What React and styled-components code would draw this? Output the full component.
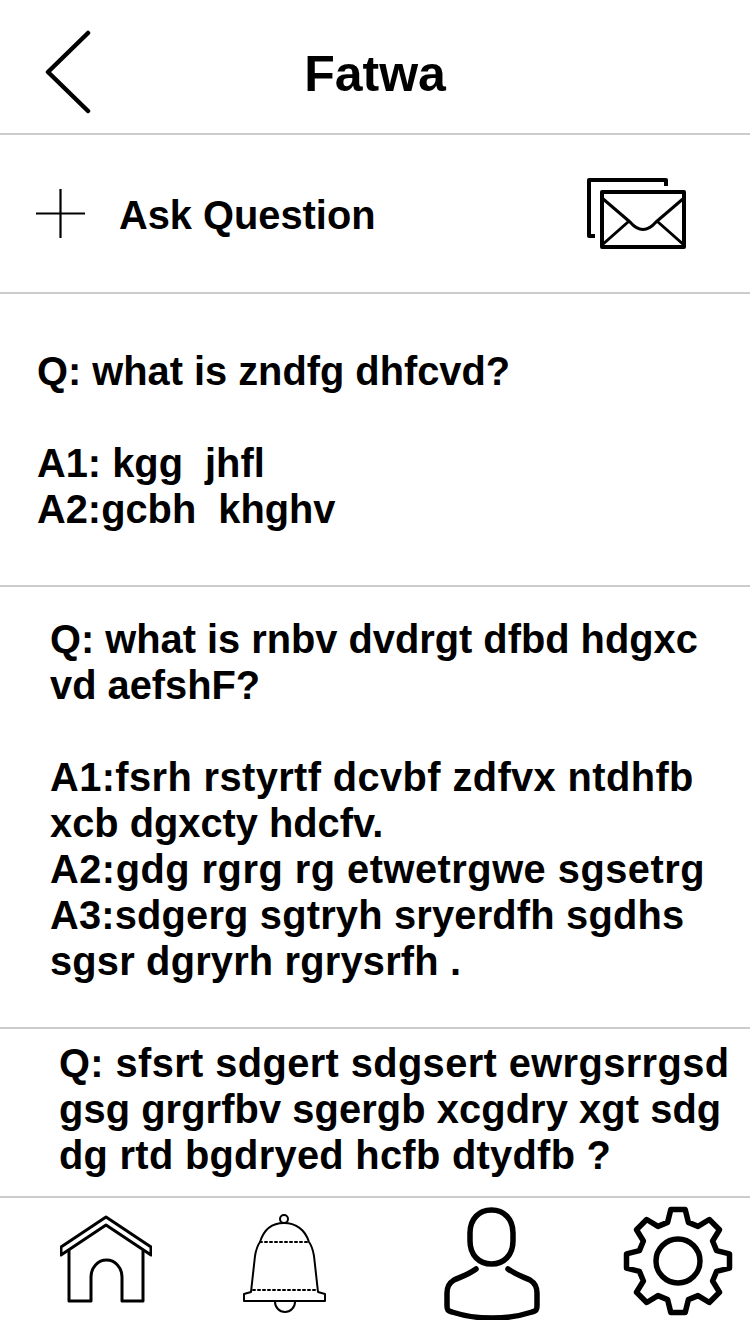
import styled, { createGlobalStyle } from "styled-components";

const GlobalStyle = createGlobalStyle`
    html, body {
        margin: 0;
        padding: 0;
        background: #fff;
    }
    body {
        font-family: "Liberation Sans", Arial, sans-serif;
        color: #000;
    }
`;

// 8 teeth, drawn from polar points so they stay even
function gearPath() {
    const pt = (deg, r) => {
        const a = ((deg - 90) * Math.PI) / 180;
        return `${(56 + r * Math.cos(a)).toFixed(1)} ${(56 + r * Math.sin(a)).toFixed(1)}`;
    };
    let d = "";
    for (let i = 0; i < 8; i++) {
        const t = i * 45;
        d += `${i === 0 ? "M" : "L"}${pt(t - 15, 40)} L${pt(t - 8, 52)} L${pt(t + 8, 52)} L${pt(t + 15, 40)} `;
    }
    return d + "Z";
}

// tracking is per line, the original font runs a bit wider on some letters
const questions = [
    {
        indent: 37,
        top: 54,
        bottom: 53,
        lines: [
            { text: "Q: what is zndfg dhfcvd?" },
            { text: "" },
            { text: "A1: kgg  jhfl" },
            { text: "A2:gcbh  khghv" },
        ],
    },
    {
        indent: 50,
        top: 29,
        bottom: 43,
        lines: [
            { text: "Q: what is rnbv dvdrgt dfbd hdgxc" },
            { text: "vd aefshF?" },
            { text: "" },
            { text: "A1:fsrh rstyrtf dcvbf zdfvx ntdhfb", tracking: 0.4 },
            { text: "xcb dgxcty hdcfv." },
            { text: "A2:gdg rgrg rg etwetrgwe sgsetrg", tracking: 0.5 },
            { text: "A3:sdgerg sgtryh sryerdfh sgdhs", tracking: 0.2 },
            { text: "sgsr dgryrh rgrysrfh .", tracking: 0.2 },
        ],
    },
    {
        indent: 59,
        top: 11,
        bottom: 18,
        lines: [
            { text: "Q: sfsrt sdgert sdgsert ewrgsrrgsd", tracking: 0.4 },
            { text: "gsg grgrfbv sgergb xcgdry xgt sdg", tracking: 0.1 },
            { text: "dg rtd bgdryed hcfb dtydfb ?", tracking: 0.3 },
        ],
    },
];

function App() {
    return (
        <>
            <GlobalStyle />
            <Page>
                <Header>
                    <BackIcon width="46" height="84" viewBox="0 0 46 84">
                        <path d="M43 3 L3 42 L43 81" />
                    </BackIcon>
                    <Title>Fatwa</Title>
                </Header>
                <AskRow>
                    <PlusIcon width="49" height="49" viewBox="0 0 49 49">
                        <path d="M0 24.500 H49 M24.500 0 V49" />
                    </PlusIcon>
                    <AskLabel>Ask Question</AskLabel>
                    <MailIcon width="100" height="72" viewBox="0 0 100 72">
                        <path d="M8 59 H2 V3 H79 V9" strokeWidth="4" />
                        <rect x="15" y="15" width="82" height="55" strokeWidth="4" />
                        <path d="M15 21 L43 45 Q56 60 69 45 L97 21 M15 68 L41 45 M97 68 L71 45" strokeWidth="3" />
                    </MailIcon>
                </AskRow>
                {questions.map((q) => (
                    <Question key={q.indent} $indent={q.indent} $top={q.top} $bottom={q.bottom}>
                        {q.lines.map((line, i) => (
                            <Line key={i} $tracking={line.tracking}>{line.text || "\u00a0"}</Line>
                        ))}
                    </Question>
                ))}
                <BottomNav>
                    <NavIcon $gap={60} $shift={10} width="92" height="88" viewBox="0 0 92 88" strokeWidth="3">
                        <path d="M1 40 V32 L46 2 L91 32 V40 L46 10 Z" />
                        <path d="M9 36 V86 H31 V62 A15.500 17 0 0 1 62 62 V86 H83 V36" />
                    </NavIcon>
                    <NavIcon $gap={91} $shift={9} width="83" height="99" viewBox="0 0 83 99" strokeWidth="2">
                        <circle cx="41" cy="5" r="4" />
                        <path d="M17 28 C21 15 30 9 41 9 C52 9 62 15 66 28 C69 32 70 36 71 42 L75 78 L82 80 V87 H1 V80 L8 78 L12 42 C13 36 14 32 17 28 Z" />
                        <path d="M32 88 A10 10 0 0 0 52 88" />
                        <path d="M17 28 H66 M10 76 H73" strokeDasharray="2 3" />
                    </NavIcon>
                    <NavIcon $gap={118} $shift={2} width="96" height="113" viewBox="0 0 96 113" strokeWidth="5.500">
                        <path d="M47.500 3 C60 3 69 12 69 26 V34 C69 48 60 57 47.500 57 C35 57 26 48 26 34 V26 C26 12 35 3 47.500 3 Z" />
                        <path d="M32 62 C24 68 16 70 10 73 C5 76 3 80 3 86 V99 C3 103 4 104 8 105 C32 113 64 113 88 105 C92 104 93 103 93 99 V86 C93 80 91 76 86 73 C80 70 72 68 64 62" />
                    </NavIcon>
                    <NavIcon $gap={82} $shift={0} width="112" height="112" viewBox="0 0 112 112" strokeWidth="5.500">
                        <path d={gearPath()} />
                        <circle cx="56" cy="56" r="22" />
                    </NavIcon>
                </BottomNav>
            </Page>
        </>
    );
}

export default App;

const Page = styled.div`
    width: 750px;
    height: 1334px;
    overflow: hidden;
    background: #fff;
    display: flex;
    flex-direction: column;
`;

const Header = styled.header`
    position: relative;
    height: 133px;
    flex: none;
    display: flex;
    align-items: center;
    justify-content: center;
    border-bottom: 2px solid #ccc;
`;

const BackIcon = styled.svg`
    position: absolute;
    left: 45px;
    top: 30px;
    fill: none;
    stroke: #000;
    stroke-width: 4.5;
    stroke-linecap: round;
    stroke-linejoin: round;
`;

const Title = styled.h1`
    margin: 0 0 -14px;
    font-size: 50px;
    line-height: 60px;
    font-weight: 700;
`;

const AskRow = styled.div`
    height: 157px;
    flex: none;
    display: flex;
    align-items: center;
    padding: 0 63px 0 36px;
    border-bottom: 2px solid #ccc;
`;

const PlusIcon = styled.svg`
    flex: none;
    fill: none;
    stroke: #000;
    stroke-width: 2.200;
`;

const AskLabel = styled.span`
    margin: 2px 0 0 34px;
    font-size: 39.800px;
    font-weight: 700;
    line-height: 46px;
`;

const MailIcon = styled.svg`
    margin-left: auto;
    margin-bottom: 2px;
    flex: none;
    fill: none;
    stroke: #000;
    stroke-linejoin: round;
`;

const Question = styled.section`
    flex: none;
    padding: ${(p) => p.$top}px 0 ${(p) => p.$bottom}px ${(p) => p.$indent}px;
    border-bottom: 2px solid #ccc;
`;

const Line = styled.div`
    font-size: 39.800px;
    font-weight: 700;
    line-height: 46px;
    letter-spacing: ${(p) => p.$tracking || 0}px;
    white-space: pre;
`;

const BottomNav = styled.nav`
    flex: 1;
    display: flex;
    align-items: flex-start;
    padding-top: 7px;
`;

const NavIcon = styled.svg`
    flex: none;
    margin-left: ${(p) => p.$gap}px;
    margin-top: ${(p) => p.$shift}px;
    fill: none;
    stroke: #000;
    stroke-linecap: round;
    stroke-linejoin: round;
`;
